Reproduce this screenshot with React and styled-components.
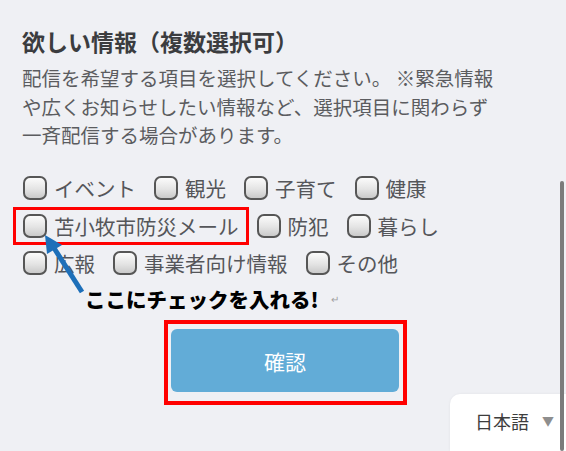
import React from "react";
import styled, { createGlobalStyle } from "styled-components";

const GlobalStyle = createGlobalStyle`
  html, body {
    margin: 0;
    padding: 0;
    background: #eff0f4;
  }
  body {
    font-family: "Noto Sans CJK JP", "Noto Sans", sans-serif;
    width: 566px;
    height: 451px;
    overflow: hidden;
  }
`;

const Page = styled.div`
  position: relative;
  width: 566px;
  height: 451px;
  box-sizing: border-box;
  padding: 26px 0 0 22px;
  background: #eff0f4;
  overflow: hidden;
`;

const Title = styled.h2`
  margin: 0;
  font-size: 23px;
  line-height: 30px;
  font-weight: 700;
  color: #3b3c3f;
`;

const Description = styled.p`
  margin: 8px 0 0;
  max-width: 480px;
  font-size: 19.5px;
  line-height: 28.5px;
  color: #5b5c5f;
`;

const Options = styled.div`
  margin-top: 20.5px;
  max-width: 480px;
  display: flex;
  flex-wrap: wrap;
  column-gap: 18px;
  row-gap: 1.5px;
  padding-left: 1px;
`;

const Option = styled.label`
  position: relative;
  height: 36px;
  display: flex;
  align-items: center;
  gap: 7px;
  font-size: 20.5px;
  color: #55565a;

  ${(p) =>
    p.$highlight &&
    `
    &::before {
      content: "";
      position: absolute;
      top: -1px;
      bottom: -1px;
      left: -10px;
      right: -10px;
      border: 3px solid #ff0000;
    }
  `}
`;

const Box = styled.span`
  width: 24px;
  height: 24px;
  box-sizing: border-box;
  border: 2px solid #565656;
  border-radius: 7px;
  background: linear-gradient(to bottom, #fbfbfb 0%, #e4e4e4 55%, #cacaca 100%);
  flex-shrink: 0;
`;

const Note = styled.div`
  margin: 4px 0 0 63px;
  display: flex;
  align-items: center;
  gap: 12px;
  font-size: 20.5px;
  line-height: 28px;
  font-weight: 900;
  color: #000;
`;

const ReturnMark = styled.span`
  font-size: 10px;
  font-weight: 400;
  color: #a0a0a0;
`;

const ButtonFrame = styled.div`
  margin: 7px 0 0 142px;
  width: 243px;
  box-sizing: border-box;
  border: 4px solid #ff0000;
  padding: 5px 4px 9px 3px;
`;

const ConfirmButton = styled.button`
  width: 100%;
  height: 63px;
  border: none;
  border-radius: 6px;
  background: #62acd7;
  color: #fff;
  font-family: inherit;
  font-size: 21px;
  cursor: pointer;
`;

const Arrow = styled.svg`
  position: absolute;
  left: 0;
  top: 0;
  pointer-events: none;
`;

const LangSelect = styled.div`
  position: absolute;
  left: 450px;
  top: 394px;
  right: 0;
  bottom: 0;
  background: #fff;
  border-top-left-radius: 10px;
  box-shadow: 0 0 3px rgba(0, 0, 0, 0.06);
  display: flex;
  align-items: center;
  padding: 0 0 4px 25px;
  gap: 13px;
  font-size: 18px;
  color: #3d3d3d;
`;

const Caret = styled.span`
  font-size: 12px;
  color: #8e8e8e;
`;

const Scrollbar = styled.div`
  position: absolute;
  right: 2px;
  top: 181px;
  bottom: 0;
  width: 4px;
  border-radius: 2px;
  background: #7b7b7b;
`;

const options = [
  "イベント",
  "観光",
  "子育て",
  "健康",
  "苫小牧市防災メール",
  "防犯",
  "暮らし",
  "広報",
  "事業者向け情報",
  "その他",
];

export default function App() {
  return (
    <>
      <GlobalStyle />
      <Page>
        <Title>欲しい情報（複数選択可）</Title>
        <Description>
          配信を希望する項目を選択してください。 ※緊急情報や広くお知らせしたい情報など、選択項目に関わらず一斉配信する場合があります。
        </Description>
        <Options>
          {options.map((o) => (
            <Option key={o} $highlight={o === "苫小牧市防災メール"}>
              <Box />
              {o}
            </Option>
          ))}
        </Options>
        <Note>
          ここにチェックを入れる!
          <ReturnMark>↵</ReturnMark>
        </Note>
        <ButtonFrame>
          <ConfirmButton>確認</ConfirmButton>
        </ButtonFrame>

        <Arrow width="566" height="451" viewBox="0 0 566 451">
          <line x1="82" y1="292" x2="54" y2="248" stroke="#1d6fb9" strokeWidth="5" />
          <polygon points="45,235 62,245 47,254" fill="#1d6fb9" />
        </Arrow>

        <LangSelect>
          日本語
          <Caret>▼</Caret>
        </LangSelect>
        <Scrollbar />
      </Page>
    </>
  );
}
